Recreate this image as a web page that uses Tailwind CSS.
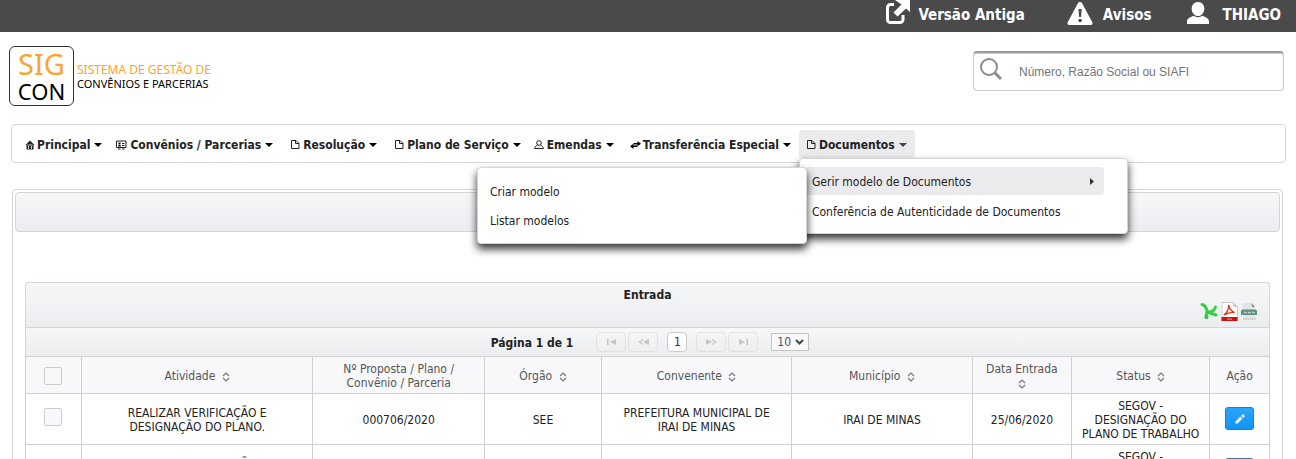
<!DOCTYPE html>
<html lang="pt-BR">
<head>
<meta charset="utf-8">
<title>SIGCON</title>
<script src="https://cdn.jsdelivr.net/npm/@tailwindcss/browser@4"></script>
</head>
<body class="h-screen overflow-hidden bg-white font-['DejaVu_Sans_Condensed','DejaVu_Sans',sans-serif] text-[12px] leading-[14px] text-[#222]">
<svg class="hidden">
  <symbol id="caret" viewBox="0 0 8 4"><path d="M0 0h8L4 4z"/></symbol>
  <symbol id="file" viewBox="0 0 9 9"><path d="M.5 .5h4.500L8 3.500v5H.5z M4.500 .5V3.500H8" fill="none" stroke="currentColor"/></symbol>
  <symbol id="sort" viewBox="0 0 8 10"><path d="M1 4l3-3 3 3M1 6l3 3 3-3" fill="none" stroke="#777" stroke-width="1.200"/></symbol>
  <symbol id="pencil" viewBox="0 0 10 10"><path d="M.5 9.500V7.500l5-5 2 2-5 5zM6.300 1.700L8 0l2 2-1.700 1.700z"/></symbol>
</svg>

<header>
  <div class="flex h-8 items-start justify-end bg-[#4a4a4a] pr-[15px] text-[15px] leading-[30px] font-bold text-white">
    <a href="#" class="flex">
      <svg class="mr-2 h-6 w-[25px]" viewBox="0 0 25 24"><path d="M9 4.500H5.500a3 3 0 0 0-3 3v12a3 3 0 0 0 3 3H15a3 3 0 0 0 3-3V15" fill="none" stroke="#fff" stroke-width="3"/><path d="M10 0h15v12l-4-3.500-8.500 8-4-4 8-8z" fill="#fff"/></svg>
      Versão Antiga</a>
    <a href="#" class="ml-[42px] flex">
      <svg class="mt-[2px] mr-[10px] h-[23px] w-[26px]" viewBox="0 0 26 23"><path d="M13 0c1 0 1.700.5 2.200 1.400l10 18.500c.9 1.600 0 3.100-1.700 3.100h-21C.800 23-.1 21.500.8 19.900l10-18.500C11.300.5 12 0 13 0z" fill="#fff"/><path d="M11.500 7h3.200l-.6 8h-2z" fill="#4a4a4a"/><circle cx="13.100" cy="18.500" r="1.800" fill="#4a4a4a"/></svg>
      Avisos</a>
    <a href="#" class="ml-9 flex">
      <svg class="mt-[2px] mr-[13px] h-[22px] w-[22px]" viewBox="0 0 22 22"><path d="M11 0c3.700 0 6.300 2.800 6.300 6.700S14.700 14 11 14 4.700 10.600 4.700 6.700 7.300 0 11 0z" fill="#fff"/><path d="M0 22v-2.500C0 16 4 15 6.500 13.800c2.500 1.800 6.500 1.800 9 0C18 15 22 16 22 19.500V22z" fill="#fff"/></svg>
      THIAGO</a>
  </div>
  <div class="flex items-start justify-between pr-3 pl-[9px]">
    <a href="#" class="mt-[14px] flex items-center">
      <span class="flex h-[60px] w-[65px] flex-col items-center rounded-md border border-[#333] pt-[3px] font-['Noto_Sans',sans-serif]">
        <span class="text-[29px] leading-[28px] text-[#f9a530]">SIG</span>
        <span class="text-[22px] leading-[26px] text-black">CON</span>
      </span>
      <span class="mt-[2px] ml-[3px] flex flex-col font-['Noto_Sans',sans-serif] leading-[14px] text-black">
        <span class="text-[12px] text-[#f9a530]">SISTEMA DE GESTÃO DE</span>
        <span class="text-[11px]">CONVÊNIOS E PARCERIAS</span>
      </span>
    </a>
    <label class="mt-[19px] flex h-10 w-[311px] rounded-[4px] border border-t-2 border-[#ccc] border-t-[#999] shadow-[inset_0_1px_1px_#ccc]">
      <svg class="mt-[5px] ml-[6px] h-[23px] w-[22px]" viewBox="0 0 22 23"><circle cx="9" cy="9" r="8" fill="none" stroke="#8c8c8c" stroke-width="2"/><path d="M15 15l6 6" stroke="#8c8c8c" stroke-width="3"/></svg>
      <input type="text" aria-label="Buscar" placeholder="Número, Razão Social ou SIAFI" class="ml-[17px] min-w-0 flex-1 font-['Liberation_Sans',sans-serif] text-[12px] outline-none placeholder:text-[#757575]">
    </label>
  </div>
</header>

<nav class="mt-[18px] mr-[10px] ml-[11px] rounded-[4px] border border-[#d5d5d5] px-[5px] pt-[5px] pb-1">
  <ul class="flex h-7 items-center font-bold">
    <li><button class="flex h-7 items-center px-2 pt-px pr-[6px] font-bold"><svg class="mr-[2px] h-[10px] w-[10px]" viewBox="0 0 10 10"><path d="M5 .5l4.500 4.500H8.500v4.500H1.500V5H.5z" fill="#222"/><path d="M2.500 5h5M3.500 6v3M6.500 6v3" stroke="#fff" stroke-width=".8"/></svg>Principal<svg class="ml-1 h-1 w-2"><use href="#caret"/></svg></button></li>
    <li><button class="flex h-7 items-center px-2 pt-px pr-[10px] font-bold"><svg class="mr-[3px] h-[10px] w-[11px]" viewBox="0 0 11 10"><path d="M.5 1h9.500v6.500H.5zM2 9h2.500M6 9h2.500M6 3.500h2.500M6 5.500h2.500" fill="none" stroke="currentColor"/><path d="M2 6.500c0-2 3-2 3 0zM2.500 2.500h2v2h-2z"/></svg>Convênios / Parcerias<svg class="ml-1 h-1 w-2"><use href="#caret"/></svg></button></li>
    <li><button class="flex h-7 items-center px-2 pt-px pr-[10px] font-bold"><svg class="mr-[3px] h-[9px] w-[9px]"><use href="#file"/></svg>Resolução<svg class="ml-1 h-1 w-2"><use href="#caret"/></svg></button></li>
    <li><button class="flex h-7 items-center px-2 pt-px pr-[5px] font-bold"><svg class="mr-[3px] h-[9px] w-[9px]"><use href="#file"/></svg>Plano de Serviço<svg class="ml-1 h-1 w-2"><use href="#caret"/></svg></button></li>
    <li><button class="flex h-7 items-center px-2 pt-px font-bold"><svg class="mr-[3px] h-[9px] w-[10px]" viewBox="0 0 10 9"><circle cx="5" cy="3" r="2.300" fill="none" stroke="currentColor"/><path d="M3.500 5C2 6 1 6.500.5 8.500h9C9 6.500 8 6 6.500 5" fill="none" stroke="currentColor"/></svg>Emendas<svg class="ml-1 h-1 w-2"><use href="#caret"/></svg></button></li>
    <li><button class="flex h-7 items-center px-2 pt-px font-bold"><svg class="mr-[2px] h-[8px] w-[11px]" viewBox="0 0 11 8"><path d="M3.500 2h4V0L11 2.700 7.500 5.200V3.500h-4z"/><path d="M7.500 6h-4v2L0 5.300 3.500 2.800V4.500h4z"/></svg>Transferência Especial<svg class="ml-1 h-1 w-2"><use href="#caret"/></svg></button></li>
    <li class="relative">
      <button class="flex h-7 items-center rounded-[4px] bg-[#ebebed] px-2 pt-px font-bold" aria-expanded="true"><svg class="mr-[3px] h-[9px] w-[9px]"><use href="#file"/></svg>Documentos<svg class="ml-1 h-1 w-2 fill-[#444]"><use href="#caret"/></svg></button>
      <ul class="absolute top-7 left-0 z-10 flex w-[329px] flex-col gap-[2px] rounded-[4px] border border-[#d5d5d5] bg-white py-2 pl-[5px] font-normal shadow-[0_5px_8px_rgba(0,0,0,0.8)]">
        <li class="relative">
          <a href="#" class="flex h-7 w-[299px] items-center justify-between rounded-[4px] bg-[#ebebed] pt-px pr-[10px] pl-[7px]">Gerir modelo de Documentos<svg class="h-[7px] w-1 fill-[#333]" viewBox="0 0 4 7"><path d="M0 0l4 3.500L0 7z"/></svg></a>
          <ul class="absolute top-0 right-[320px] z-20 flex w-[330px] flex-col gap-[1px] rounded-[4px] border border-[#d5d5d5] bg-white px-[5px] py-[9px] shadow-[0_5px_8px_rgba(0,0,0,0.8)]">
            <li><a href="#" class="flex h-7 items-center px-[7px] pt-px">Criar modelo</a></li>
            <li><a href="#" class="flex h-7 items-center px-[7px] pt-px">Listar modelos</a></li>
          </ul>
        </li>
        <li><a href="#" class="flex h-7 items-center pt-px pl-[7px]">Conferência de Autenticidade de Documentos</a></li>
      </ul>
    </li>
  </ul>
</nav>

<main class="mt-[26px] mr-[13px] ml-3 rounded-[4px] border border-[#d5d5d5] p-[2px]">
  <div class="h-10 rounded-[4px] border border-[#d5d5d5] bg-linear-to-b from-[#f6f7f9] to-[#ebedf0]"></div>
  <section class="mx-[10px] mt-[50px]">
    <div class="flex h-[45px] flex-col rounded-t-[4px] border border-b-0 border-[#d5d5d5] bg-linear-to-b from-[#f6f7f9] to-[#ebedf0]">
      <h2 class="mt-[5px] text-center font-bold">Entrada</h2>
      <div class="mr-[11px] flex justify-end gap-[2px]">
        <button aria-label="Exportar XLS"><svg class="h-[19px] w-[19px]" viewBox="0 0 19 19"><path d="M2 2.500c3 0 4 3 5.500 7.500M15.500 5c-1 4-4 4.500-8 5.500M7 9.500L6 15M9 10.500l7 2.500" fill="none" stroke="#35cf45" stroke-width="3" stroke-linecap="round"/><circle cx="6.500" cy="15" r="2" fill="#2c3"/></svg></button>
        <button aria-label="Exportar PDF"><svg class="h-[19px] w-[17px]" viewBox="0 0 17 19"><path d="M1 .5h11l4.500 4.500v13.500H1z" fill="#fff" stroke="#ccc"/><path d="M12 0v5h5z" fill="#ccc"/><path d="M3 13c2.500-2 5-6 4.500-10 1 4 3 6.500 6 7.500-4-.5-7 .5-10.500 2.500z" fill="none" stroke="#e0301e" stroke-width="1.300"/><path d="M.5 15h16v4H.5z" fill="#c81212"/><path d="M6 17h5" stroke="#f4a0a0"/></svg></button>
        <button aria-label="Exportar CSV"><svg class="h-[19px] w-[18px]" viewBox="0 0 18 19"><path d="M3 1h8l4 4v12H3z" fill="#e2e5e5"/><path d="M11 1l4 4h-2.500z" fill="#777"/><path d="M1 9l1-1.500h14L17 9v4H1z" fill="#5d9184"/><path d="M3 17h13" stroke="#bbb"/><path d="M4 10.500h3M8 10.500h3M12 10.500h3" stroke="#b9d3cb" stroke-width="1.500"/></svg></button>
      </div>
    </div>
    <div class="flex h-[29px] items-center justify-center border border-b-0 border-[#d5d5d5] bg-linear-to-b from-[#f6f7f9] to-[#ebedf0] pl-[5px]">
      <span class="mr-[23px] pt-px font-bold">Página 1 de 1</span>
      <div class="flex gap-[2px] text-[#333]">
        <button disabled aria-label="Primeira" class="flex h-5 w-[30px] items-center justify-center rounded-[4px] border border-[#d5d5d5] opacity-50"><svg class="h-[6px] w-[9px] fill-[#999]" viewBox="0 0 9 6"><path d="M0 0h1.500v6H0zM9 0v6L3 3z"/></svg></button>
        <button disabled aria-label="Anterior" class="flex h-5 w-[30px] items-center justify-center rounded-[4px] border border-[#d5d5d5] opacity-50"><svg class="h-[6px] w-[11px] fill-[#999]" viewBox="0 0 11 6"><path d="M11 0v6L5 3zM5 0v1.500L2 3l3 1.500V6L0 3z"/></svg></button>
        <button aria-current="page" class="mx-[7px] h-5 w-5 rounded-[4px] border border-[#ccc] bg-white">1</button>
        <button disabled aria-label="Próxima" class="flex h-5 w-[30px] items-center justify-center rounded-[4px] border border-[#d5d5d5] opacity-50"><svg class="h-[6px] w-[11px] fill-[#999]" viewBox="0 0 11 6"><path d="M0 0v6l6-3zM6 0v1.500L9 3 6 4.500V6l5-3z"/></svg></button>
        <button disabled aria-label="Última" class="flex h-5 w-[30px] items-center justify-center rounded-[4px] border border-[#d5d5d5] opacity-50"><svg class="h-[6px] w-[9px] fill-[#999]" viewBox="0 0 9 6"><path d="M7.500 0H9v6H7.500zM0 0v6l6-3z"/></svg></button>
      </div>
      <div class="ml-[13px] grid items-center">
        <select aria-label="Linhas por página" class="col-start-1 row-start-1 h-[18px] w-[38px] appearance-none border border-[#c5c5c5] bg-[#f8f8fa] pl-[5px] text-[#555]"><option>10</option></select>
        <svg class="pointer-events-none col-start-1 row-start-1 mr-[5px] h-[6px] w-[9px] justify-self-end" viewBox="0 0 9 6"><path d="M1 1l3.500 3.500L8 1" fill="none" stroke="#444" stroke-width="2"/></svg>
      </div>
    </div>
    <table class="w-full table-fixed border-collapse text-center [&_td]:border [&_td]:border-[#d0d0d0] [&_td]:px-1 [&_td]:pt-[5px] [&_td]:pb-[3px] [&_th]:border [&_th]:border-[#d0d0d0] [&_th]:bg-[#f8f8fb] [&_th]:px-1 [&_th]:pt-[5px] [&_th]:pb-[3px] [&_th]:font-normal [&_th]:text-[#555]">
      <colgroup><col class="w-[4.5%]"><col class="w-[18.6%]"><col class="w-[13.8%]"><col class="w-[9.4%]"><col class="w-[15.3%]"><col class="w-[14.5%]"><col class="w-[8%]"><col class="w-[11.1%]"><col class="w-[4.8%]"></colgroup>
      <thead>
        <tr class="h-[37px]">
          <th><input type="checkbox" aria-label="Selecionar todos" class="mx-auto block size-[18px] appearance-none rounded-[2px] border border-[#ccc] bg-[#f8f8fb]"></th>
          <th>Atividade <svg class="ml-[3px] inline h-[10px] w-2"><use href="#sort"/></svg></th>
          <th>Nº Proposta / Plano /<br>Convênio / Parceria</th>
          <th>Órgão <svg class="ml-[3px] inline h-[10px] w-2"><use href="#sort"/></svg></th>
          <th>Convenente <svg class="ml-[3px] inline h-[10px] w-2"><use href="#sort"/></svg></th>
          <th>Município <svg class="ml-[3px] inline h-[10px] w-2"><use href="#sort"/></svg></th>
          <th>Data Entrada<br><svg class="inline h-[10px] w-2"><use href="#sort"/></svg></th>
          <th>Status <svg class="ml-[3px] inline h-[10px] w-2"><use href="#sort"/></svg></th>
          <th>Ação</th>
        </tr>
      </thead>
      <tbody>
        <tr class="h-[51px]">
          <td><input type="checkbox" aria-label="Selecionar linha 1" class="mx-auto mb-[6px] block size-[18px] appearance-none rounded-[2px] border border-[#ccc] bg-[#f8f8fb]"></td>
          <td>REALIZAR VERIFICAÇÃO E<br>DESIGNAÇÃO DO PLANO.</td>
          <td>000706/2020</td>
          <td>SEE</td>
          <td>PREFEITURA MUNICIPAL DE<br>IRAI DE MINAS</td>
          <td>IRAI DE MINAS</td>
          <td>25/06/2020</td>
          <td class="whitespace-nowrap">SEGOV -<br>DESIGNAÇÃO DO<br>PLANO DE TRABALHO</td>
          <td><button aria-label="Editar" class="mx-auto mb-[3px] flex h-[23px] w-[29px] items-center justify-center rounded-[3px] border border-[#1b82c8] bg-linear-to-b from-[#2aa5fb] to-[#0d95f5]"><svg class="size-[10px] fill-white"><use href="#pencil"/></svg></button></td>
        </tr>
        <tr class="h-[51px]">
          <td><input type="checkbox" aria-label="Selecionar linha 2" class="mx-auto block size-[18px] appearance-none rounded-[2px] border border-[#ccc] bg-[#f8f8fb]"></td>
          <td>REALIZAR VERIFICAÇÃO E<br>DESIGNAÇÃO DO PLANO.</td>
          <td></td>
          <td></td>
          <td></td>
          <td></td>
          <td></td>
          <td class="whitespace-nowrap">SEGOV -<br>DESIGNAÇÃO DO<br>PLANO DE TRABALHO</td>
          <td><button aria-label="Editar" class="mx-auto mb-[3px] flex h-[23px] w-[29px] items-center justify-center rounded-[3px] border border-[#1b82c8] bg-linear-to-b from-[#2aa5fb] to-[#0d95f5]"><svg class="size-[10px] fill-white"><use href="#pencil"/></svg></button></td>
        </tr>
      </tbody>
    </table>
  </section>
</main>
</body>
</html>
